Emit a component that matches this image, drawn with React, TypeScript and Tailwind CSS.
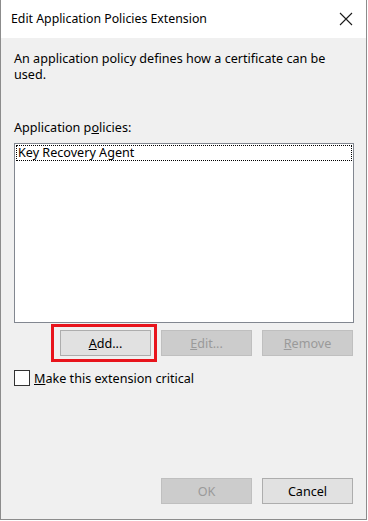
import React from "react";

const font = { fontFamily: '"Segoe UI", "Noto Sans", "Open Sans", sans-serif' };

function WinButton({
  children,
  disabled,
  className = "",
}: {
  children: React.ReactNode;
  disabled?: boolean;
  className?: string;
}) {
  const base =
    "w-[91px] h-[26px] flex items-center justify-center text-[12.6px] leading-[15px] border";
  const look = disabled
    ? "bg-[#cccccc] border-[#bfbfbf] text-[#9a9a9a]"
    : "bg-[#e1e1e1] border-[#adadad] text-black";
  return <div className={`${base} ${look} ${className}`}>{children}</div>;
}

export default function App() {
  return (
    <div className="w-[368px] h-[521px] bg-white" style={font}>
      <div className="w-[367px] h-[520px] flex flex-col bg-[#f0f0f0] border-l border-r border-b border-[#8c8c8c]">
        {/* title bar */}
        <div className="h-[38px] bg-white flex items-center justify-between pl-[10px] pr-[12px] shrink-0">
          <span className="text-[12.3px] text-black mt-[1px]">Edit Application Policies Extension</span>
          <svg width="14" height="14" viewBox="0 0 14 14" className="mr-[1px]">
            <path d="M1 1 L13 13 M13 1 L1 13" stroke="#1a1a1a" strokeWidth="1.1" />
          </svg>
        </div>

        <div className="flex flex-col flex-1 pl-[13px] pr-[12px] text-[12.6px] text-black leading-[15px]">
          <p className="mt-[13px] leading-[16px]">
            An application policy defines how a certificate can be
            <br />
            used.
          </p>

          <div className="mt-[37px]">
            Application p<span className="underline">o</span>licies:
          </div>

          <div className="mt-[8px] h-[180px] bg-white border border-[#828790] p-[1px]">
            <div className="border border-dotted border-black h-[16px] leading-[14px] pl-[1px]">
              Key Recovery Agent
            </div>
          </div>

          <div className="mt-[7px] flex justify-end gap-[10px] pr-[1px]">
            <div className="relative">
              <WinButton>
                <span>
                  <span className="underline">A</span>dd...
                </span>
              </WinButton>
              <div className="absolute left-[-9px] top-[-6px] w-[106px] h-[38px] border-[3px] border-[#e8141c]" />
            </div>
            <WinButton disabled>
              <span>
                <span className="underline">E</span>dit...
              </span>
            </WinButton>
            <WinButton disabled>
              <span>
                <span className="underline">R</span>emove
              </span>
            </WinButton>
          </div>

          <div className="mt-[14px] flex items-center gap-[4px]">
            <div className="w-[16px] h-[16px] bg-white border border-[#333333]" />
            <span>
              <span className="underline">M</span>ake this extension critical
            </span>
          </div>

          <div className="mt-auto mb-[15px] flex justify-end gap-[10px] pr-[1px]">
            <WinButton disabled>OK</WinButton>
            <WinButton>Cancel</WinButton>
          </div>
        </div>
      </div>
    </div>
  );
}
